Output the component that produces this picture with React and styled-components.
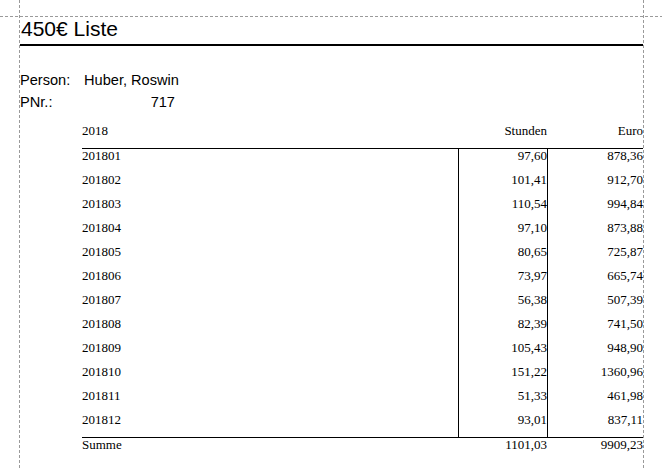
import styled, { createGlobalStyle } from 'styled-components';


const GlobalStyle = createGlobalStyle`
    html, body {
        margin: 0;
        padding: 0;
        background: #FFFFFF;
    }
`;

const Page = styled.div`
    position: relative;
    width: 662px;
    height: 470px;
    overflow: hidden;
    background: #FFFFFF;
`;

const GuideH = styled.div`
    position: absolute;
    left: 0;
    right: 0;
    top: ${({ $top }) => $top}px;
    height: 1px;
    background: repeating-linear-gradient(to right, #9A9A9A 0 3px, transparent 3px 5px);
`;

const GuideV = styled.div`
    position: absolute;
    top: 0;
    bottom: 0;
    left: ${({ $left }) => $left}px;
    width: 1px;
    background: repeating-linear-gradient(to bottom, #9A9A9A 0 3px, transparent 3px 5px);
`;

const Sheet = styled.div`
    width: 623px;
    padding: 17px 0 0 20px;
    color: #000000;
`;

const Header = styled.div`
    padding-bottom: 3px;
    border-bottom: 2px solid #000000;
`;

const Title = styled.h1`
    margin: 0;
    padding-left: 1px;
    font-family: "Liberation Sans", Arial, sans-serif;
    font-size: 21px;
    font-weight: 400;
    line-height: 24px;
`;

const Info = styled.div`
    margin-top: 23px;
    font-family: "Liberation Sans", Arial, sans-serif;
    font-size: 14.6px;
    line-height: 22px;
`;

const InfoRow = styled.div`
    display: flex;
`;

const Label = styled.span`
    width: 64px;
`;

const Value = styled.span`
    width: ${({ $right }) => ($right ? '91px' : 'auto')};
    text-align: ${({ $right }) => ($right ? 'right' : 'left')};
`;

const Table = styled.div`
    margin: 10px 0 0 62px;
    width: 561px;
    font-family: "Liberation Serif", "Times New Roman", serif;
    font-size: 13px;
`;

const Grid = styled.div`
    display: grid;
    grid-template-columns: 377px 89px 95px;
`;

const HeadRow = styled(Grid)`
    line-height: 16px;
    padding-bottom: 9px;
    border-bottom: 1px solid #000000;
`;

const BodyRow = styled(Grid)`
    height: 24px;
    line-height: 13px;
`;

const SumRow = styled(Grid)`
    line-height: 13px;
    border-top: 1px solid #000000;
`;

const Cell = styled.div`
    text-align: ${({ $num }) => ($num ? 'right' : 'left')};
    border-right: 1px solid ${({ $line }) => ($line ? '#000000' : 'transparent')};
    white-space: nowrap;
`;

const LastCell = styled.div`
    text-align: right;
    white-space: nowrap;
`;


const rows = [
    ['201801', '97,60', '878,36'],
    ['201802', '101,41', '912,70'],
    ['201803', '110,54', '994,84'],
    ['201804', '97,10', '873,88'],
    ['201805', '80,65', '725,87'],
    ['201806', '73,97', '665,74'],
    ['201807', '56,38', '507,39'],
    ['201808', '82,39', '741,50'],
    ['201809', '105,43', '948,90'],
    ['201810', '151,22', '1360,96'],
    ['201811', '51,33', '461,98'],
    ['201812', '93,01', '837,11'],
];


function App() {
    return (
        <Page>
            <GlobalStyle />
            <Sheet>
                <Header>
                    <Title>450€ Liste</Title>
                </Header>
                <Info>
                    <InfoRow>
                        <Label>Person:</Label>
                        <Value>Huber, Roswin</Value>
                    </InfoRow>
                    <InfoRow>
                        <Label>PNr.:</Label>
                        <Value $right>717</Value>
                    </InfoRow>
                </Info>
                <Table>
                    <HeadRow>
                        <Cell>2018</Cell>
                        <Cell $num>Stunden</Cell>
                        <LastCell>Euro</LastCell>
                    </HeadRow>
                    {rows.map(([month, hours, euro]) => (
                        <BodyRow key={month}>
                            <Cell $line>{month}</Cell>
                            <Cell $num $line>{hours}</Cell>
                            <LastCell>{euro}</LastCell>
                        </BodyRow>
                    ))}
                    <SumRow>
                        <Cell>Summe</Cell>
                        <Cell $num>1101,03</Cell>
                        <LastCell>9909,23</LastCell>
                    </SumRow>
                </Table>
            </Sheet>
            <GuideH $top={16} />
            <GuideV $left={19} />
            <GuideV $left={643} />
        </Page>
    );
}


export default App;
